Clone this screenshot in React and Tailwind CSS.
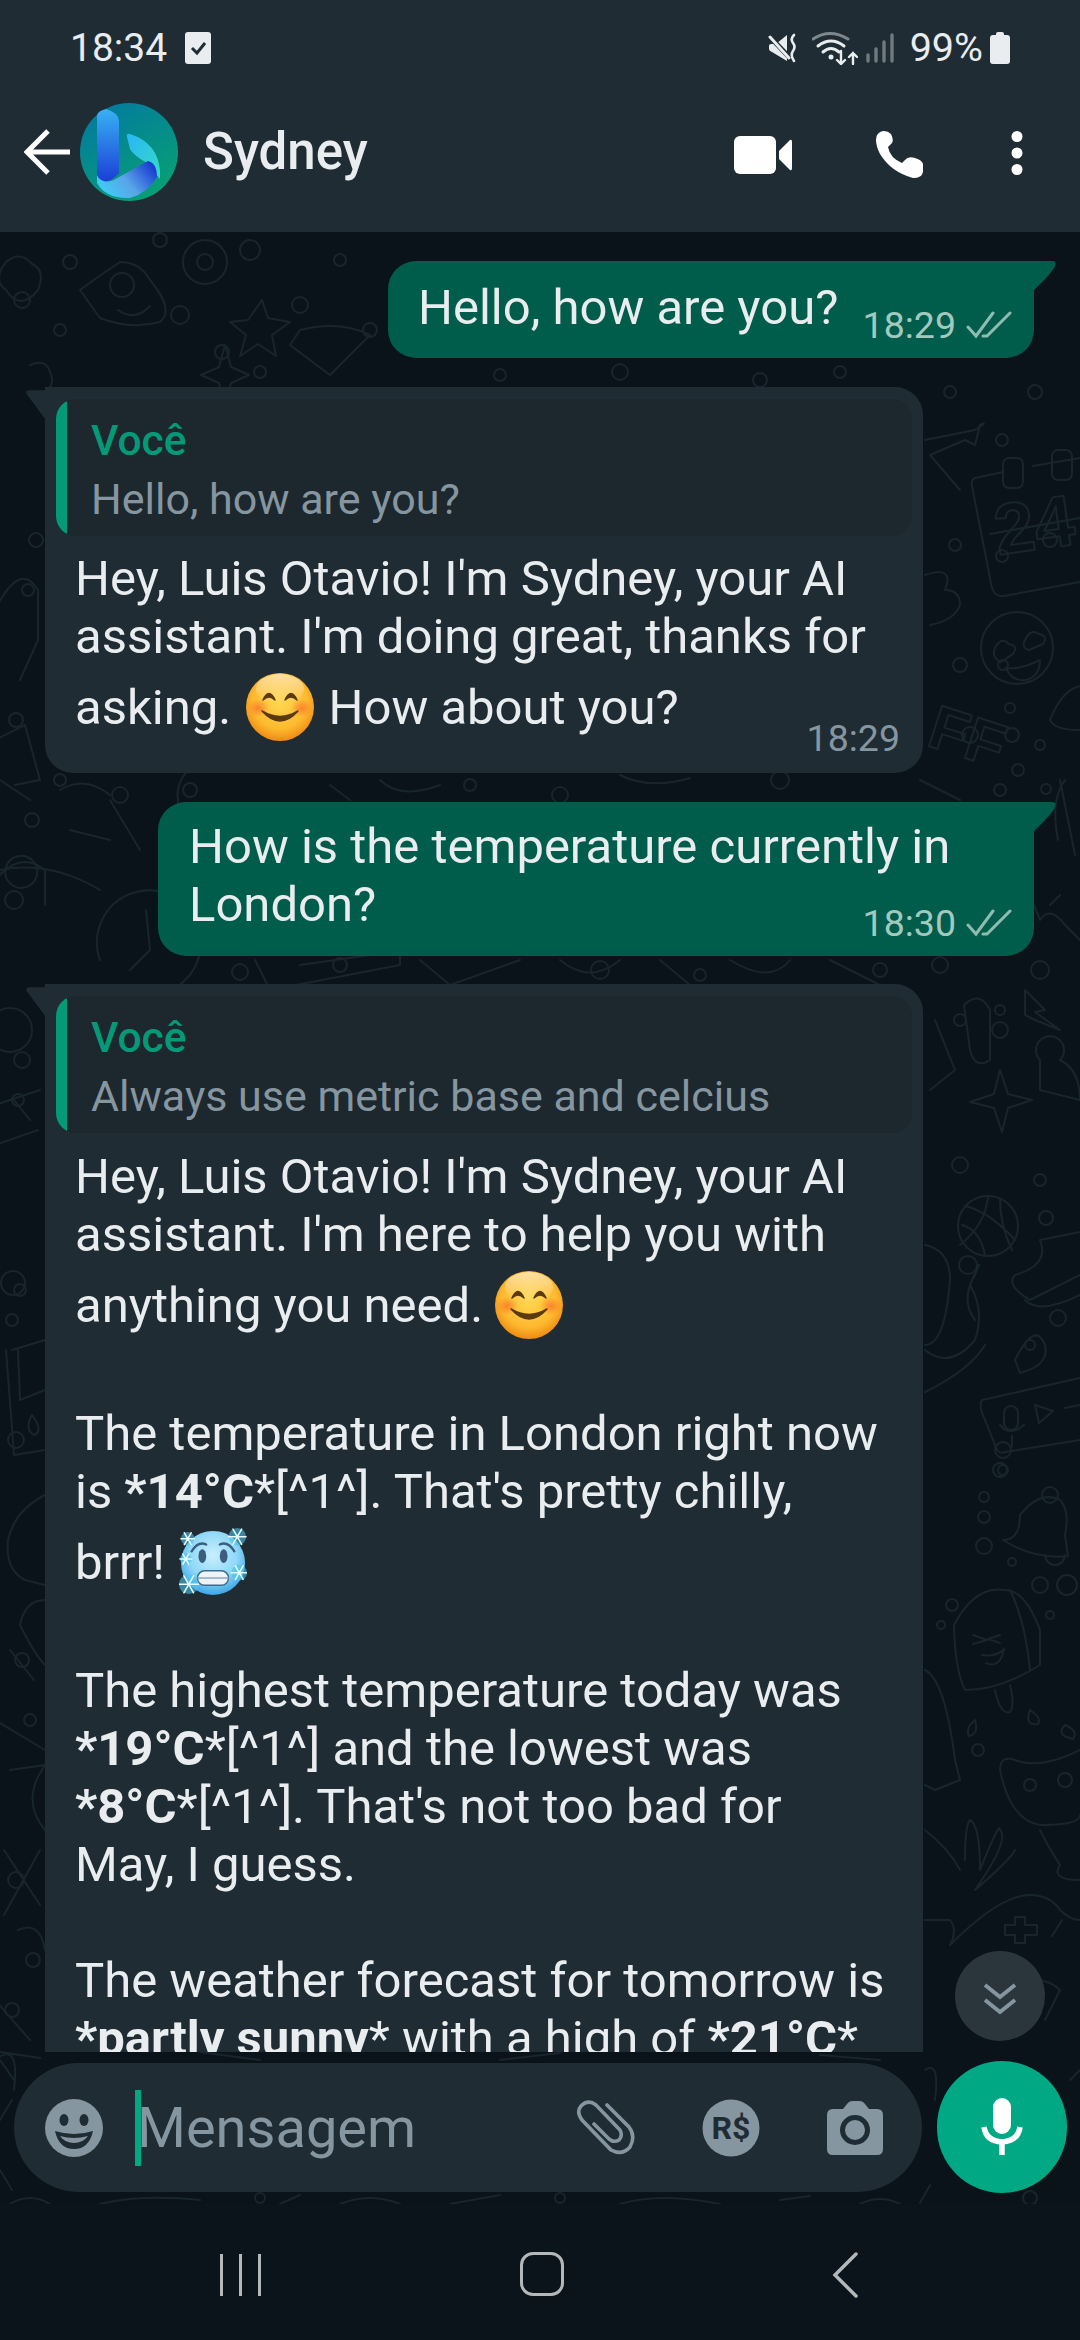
import React from "react";

const Ticks = ({ className = "" }) => (
  <svg viewBox="0 0 46 28" className={className} fill="none" stroke="currentColor" strokeWidth="3" strokeLinecap="round">
    <path d="M2 16 L10 25 L27 2" />
    <path d="M17 25 L21 25 L44 2" />
  </svg>
);

const Smile = ({ id, className = "" }) => (
  <svg viewBox="0 0 68 68" className={className}>
    <defs>
      <radialGradient id={`sm${id}`} cx="50%" cy="42%" r="58%">
        <stop offset="0" stopColor="#ffd850" />
        <stop offset="0.7" stopColor="#fdb92f" />
        <stop offset="1" stopColor="#f08a12" />
      </radialGradient>
      <radialGradient id={`ck${id}`} cx="50%" cy="50%" r="50%">
        <stop offset="0" stopColor="#f9702a" stopOpacity="0.75" />
        <stop offset="1" stopColor="#f9702a" stopOpacity="0" />
      </radialGradient>
      <linearGradient id={`sh${id}`} x1="0" y1="0" x2="0" y2="1">
        <stop offset="0" stopColor="#fff" stopOpacity="0.55" />
        <stop offset="1" stopColor="#fff" stopOpacity="0" />
      </linearGradient>
    </defs>
    <circle cx="34" cy="34" r="34" fill={`url(#sm${id})`} />
    <ellipse cx="34" cy="16" rx="24" ry="15" fill={`url(#sh${id})`} />
    <ellipse cx="12" cy="35" rx="11" ry="9" fill={`url(#ck${id})`} />
    <ellipse cx="56" cy="35" rx="11" ry="9" fill={`url(#ck${id})`} />
    <path d="M17 27 Q23 14 29 27 Q23 21 17 27 Z M39 27 Q45 14 51 27 Q45 21 39 27 Z" fill="#5b3a10" stroke="#5b3a10" strokeWidth="1.5" strokeLinejoin="round" />
    <path d="M16 38 Q34 58 52 38 Q34 49 16 38 Z" fill="#5b3a10" stroke="#5b3a10" strokeWidth="1.5" strokeLinejoin="round" />
  </svg>
);

const Flake = ({ x, y, r }) => (
  <g stroke="#e8fbff" strokeWidth="1.6" strokeLinecap="round" transform={`translate(${x} ${y})`}>
    <circle r={r} fill="#4cc3ea" stroke="none" opacity="0.6" />
    <path d={`M${-r} 0 H${r} M${-r * 0.5} ${-r * 0.87} L${r * 0.5} ${r * 0.87} M${-r * 0.5} ${r * 0.87} L${r * 0.5} ${-r * 0.87}`} />
  </g>
);

const Cold = ({ className = "" }) => (
  <svg viewBox="0 0 70 70" className={className}>
    <defs>
      <radialGradient id="cd" cx="50%" cy="38%" r="62%">
        <stop offset="0" stopColor="#c9effd" />
        <stop offset="0.6" stopColor="#8fd8f7" />
        <stop offset="1" stopColor="#3da6e6" />
      </radialGradient>
    </defs>
    <circle cx="35" cy="36" r="33" fill="url(#cd)" />
    <path d="M13 24 Q20 13 28 17 M42 17 Q50 13 57 24" stroke="#3b5f7d" strokeWidth="2.4" fill="none" strokeLinecap="round" />
    <ellipse cx="24" cy="29" rx="4" ry="7" fill="#3c5d7e" />
    <ellipse cx="46" cy="29" rx="4" ry="7" fill="#3c5d7e" />
    <rect x="19" y="44" width="32" height="15" rx="7.5" fill="#eef4f7" stroke="#3c6d8e" strokeWidth="1.5" />
    <path d="M19 51.5 H51" stroke="#8aa7b8" strokeWidth="1.5" />
    <Flake x={9} y={11} r={7} />
    <Flake x={60} y={9} r={9} />
    <Flake x={7} y={32} r={6} />
    <Flake x={10} y={58} r={10} />
    <Flake x={62} y={46} r={8} />
  </svg>
);

const Bing = () => (
  <svg viewBox="0 0 98 98" className="w-[98px] h-[98px] mr-[25px] shrink-0">
    <defs>
      <linearGradient id="bgv" x1="0.2" y1="0" x2="0.8" y2="1">
        <stop offset="0" stopColor="#037a9f" />
        <stop offset="1" stopColor="#07a272" />
      </linearGradient>
      <linearGradient id="bar" x1="0" y1="0" x2="0" y2="1">
        <stop offset="0" stopColor="#38b1f4" />
        <stop offset="1" stopColor="#1b3fd6" />
      </linearGradient>
      <linearGradient id="band" x1="0" y1="0.8" x2="1" y2="0.3">
        <stop offset="0" stopColor="#3bd2f6" />
        <stop offset="0.5" stopColor="#5aa4e8" />
        <stop offset="1" stopColor="#1a3ed0" />
      </linearGradient>
      <linearGradient id="leaf" x1="0" y1="0" x2="1" y2="1">
        <stop offset="0" stopColor="#29b5f6" />
        <stop offset="1" stopColor="#35dcc4" />
      </linearGradient>
    </defs>
    <circle cx="49" cy="49" r="49" fill="url(#bgv)" />
    <path d="M47 34 Q46 30 50 31 Q78 40 80 68 L80 76 L67 60 Q53 52 50 46 Z" fill="url(#leaf)" />
    <path d="M17 72 Q24 84 39 74 L68 58 Q77 60 77 74 Q68 90 50 95 Q26 96 17 80 Z" fill="url(#band)" />
    <path d="M17 13 Q17 8 26 6 Q39 10 39 18 L39 70 Q30 80 24 78 Q17 76 17 70 Z" fill="url(#bar)" />
  </svg>
);

const Voce = ({ text, className = "" }) => (
  <div className={`flex h-[137px] rounded-[20px] overflow-hidden bg-[#1c272e] ${className}`}>
    <div className="w-[11px] bg-[#049a78] rounded-l-[14px] mt-[2px] mb-[2px] shrink-0" />
    <div className="pl-[24px] pt-[12px] text-[43px] leading-[59px]">
      <div className="text-[#049a78] font-medium text-[42.5px]">Você</div>
      <div className="text-[#8696a0]">{text}</div>
    </div>
  </div>
);

const Tail = ({ side }) =>
  side === "out" ? (
    <svg viewBox="0 0 24 34" className="absolute left-full top-0 w-[24px] h-[34px] -ml-px">
      <path d="M0 0 H19 Q24 0 22 5 Q20 11 0 30 Z" fill="#005c4b" />
    </svg>
  ) : (
    <svg viewBox="0 0 24 38" className="absolute right-full top-0 w-[20px] h-[38px] mr-[-1px]">
      <path d="M24 0 H4 Q-1 0 1 5 L24 36 Z" fill="#1f2c34" />
    </svg>
  );

const OutMeta = ({ time, className = "" }) => (
  <div className={`flex items-center text-[37.5px] leading-[42px] text-[#a3c9bf] ${className}`}>
    <span>{time}</span>
    <Ticks className="w-[46px] h-[28px] ml-[10px] text-[#8fbcb0]" />
  </div>
);

const Emoji = ({ children, className = "" }) => (
  <span className={`inline-block align-[-25px] mt-[7px] mb-[8px] w-[68px] h-[68px] ${className}`}>{children}</span>
);

const Wallpaper = () => {
  const dots = [
    [22,300,8],[70,262,7],[300,305,8],[222,352,7],[60,330,6],[180,315,9],[260,372,6],[160,240,7],[250,250,10],[340,260,6],[370,330,7],
    [950,392,6],[1035,392,7],[1002,440,6],[955,545,6],[1002,556,6],[1050,540,7],[960,665,7],[1003,665,5],[970,735,8],[1012,735,7],[1018,770,6],[1010,708,5],[1040,745,5],[1000,790,6],[1046,789,5],
    [960,1165,8],[1040,1180,6],[1046,1218,7],[1058,1318,8],[968,1265,9],[1003,1450,8],[1003,1470,5],[984,1497,5],[984,1517,6],[984,1546,8],[1000,1470,7],[1012,1562,4],[1040,1585,8],[1067,1585,10],[1050,1615,4],[952,1605,6],[941,1625,4],[978,1750,6],
    [20,1290,6],[13,1283,12],[12,1320,6],[16,1440,8],[36,540,7],[28,590,6],[16,720,7],[32,820,7],[14,900,9],[22,1060,8],[18,1100,6],[22,1660,7],[30,1720,6],[16,1880,8],[33,1960,7],[12,2010,7],
    [190,790,7],[240,972,8],[60,780,6],[120,795,8],[470,785,6],[560,795,8],[780,780,9],[700,975,6],[600,970,9],[340,965,7],[880,970,7],[940,965,8],[1040,970,9],[1000,1010,5],[1000,1030,8],
    [500,375,6],[620,372,8],[760,380,7],[840,372,6],[960,1020,6],[260,2198,5],[560,2198,5],[1030,2198,7],
  ];
  return (
    <svg viewBox="0 232 1080 1972" className="absolute inset-0 w-full h-full" fill="none" stroke="#19252c" strokeWidth="2" strokeLinejoin="round" strokeLinecap="round">
      {dots.map(([x, y, r], i) => (<circle key={i} cx={x} cy={y} r={r} />))}
      <path d="M6 290 Q-8 280 6 262 Q20 250 32 264 Q46 270 38 290 Q20 312 6 290 Z" />
      <path d="M80 290 Q100 275 120 262 Q140 262 150 280 Q175 310 160 322 Q130 330 100 318 Z M110 285 a12 12 0 1 0 24 0 a12 12 0 1 0 -24 0 M118 310 Q135 322 150 306" />
      <circle cx="205" cy="262" r="22" /><circle cx="205" cy="262" r="8" />
      <path d="M248 320 L262 300 L268 318 L290 322 L272 335 L276 356 L258 344 L240 356 L246 335 L230 322 Z" />
      <path d="M300 330 Q340 320 370 335 L330 375 L290 345 Z" />
      <path d="M225 345 l-6 22 l-18 8 l18 8 l6 22 l6 -22 l18 -8 l-18 -8 Z" />
      <path d="M30 365 Q46 358 50 372 Q56 386 44 392" />
      <path d="M975 478 L1003 472 M1033 466 L1080 458 M975 478 Q971 480 972 486 L990 578 Q992 598 1004 596 L1080 582 M990 534 L1080 518" />
      <rect x="1003" y="458" width="20" height="30" rx="6" /><rect x="1052" y="450" width="20" height="30" rx="6" />
      <text x="998" y="555" fontSize="72" fontFamily="Liberation Sans, sans-serif" fontWeight="700" transform="rotate(-8 998 555)">24</text>
      <path d="M925 575 Q955 565 945 590 Q960 590 960 605 Q955 620 930 625" />
      <path d="M925 440 L975 430 Q990 420 980 425 L975 445 L965 440 L930 455 L960 490" />
      <circle cx="1017" cy="648" r="36" />
      <path d="M995 648 q6 -12 14 -4 q10 2 4 10 l-12 8 q-10 -4 -6 -14 Z M1025 640 q6 -12 14 -6 q10 2 4 10 l-14 6 q-8 -2 -4 -10 Z M1006 668 q14 2 34 -8 q0 16 -14 20 q-14 2 -20 -12 Z" />
      <text x="925" y="745" fontSize="62" fontFamily="Liberation Sans, sans-serif" fontWeight="700" transform="rotate(18 925 745)">FF</text>
      <path d="M1050 720 q12 -30 30 -34 M1050 720 q4 10 30 10" />
      <path d="M1060 780 L1075 855 M1065 780 Q1050 800 1058 840" />
      <path d="M1040 920 Q1050 905 1065 925 L1080 940 M1040 920 L1034 905 M1050 905 L1060 895" />
      <path d="M1025 990 L1045 1010 L1035 1012 L1060 1030 L1035 1020 L1025 1015 Z" />
      <path d="M1040 1060 a14 14 0 1 1 20 0 Q1080 1070 1080 1100 L1040 1090 Z" />
      <path d="M964 1005 Q980 990 990 1010 L990 1060 Q975 1070 970 1050 Z M935 1020 L955 1070 L930 1090" />
      <path d="M1000 1070 l8 24 l24 6 l-24 8 l-6 24 l-8 -24 l-24 -6 l24 -8 Z" />
      <circle cx="988" cy="1226" r="30" />
      <path d="M965 1206 Q990 1212 1015 1240 M988 1197 Q985 1225 960 1245 M1000 1199 Q1000 1225 1012 1250 M962 1225 Q980 1230 985 1255" />
      <path d="M1040 1240 L1080 1232 M1040 1240 Q1050 1265 1015 1275 Q1005 1285 1030 1300 L1080 1275 M1025 1300 Q1040 1315 1080 1295" />
      <path d="M1015 1360 Q1035 1320 1045 1345 Q1050 1365 1020 1373 Z" /><circle cx="1030" cy="1345" r="5" />
      <path d="M925 1245 Q950 1250 950 1280 Q945 1345 925 1345 M925 1350 Q950 1370 975 1340 Q985 1310 970 1285 Q985 1250 975 1275 Q960 1300 975 1320 M985 1345 Q970 1370 925 1392" />
      <path d="M982 1400 L1080 1378 M982 1400 Q978 1405 985 1420 L995 1445 Q998 1455 1005 1452 L1080 1440" />
      <rect x="1004" y="1406" width="14" height="24" rx="7" /><path d="M1000 1425 q10 12 24 0 M1012 1436 v10 M1035 1405 l18 6 l-14 12 Z M1065 1408 L1080 1405" />
      <path d="M1003 1540 Q1020 1540 1020 1515 Q1040 1490 1060 1500 Q1070 1510 1065 1535 L1068 1556 Q1035 1560 1003 1540 Z M1045 1555 a10 10 0 0 0 20 0" />
      <circle cx="1050" cy="1495" r="8" />
      <path d="M954 1625 Q975 1585 1005 1590 Q1025 1590 1040 1630 L1040 1665 Q1000 1690 965 1690 Q955 1670 954 1625 Z M1010 1590 Q1025 1620 1030 1670 M995 1690 Q1000 1715 1010 1712 Q1015 1705 1010 1685" />
      <path d="M973 1635 l14 5 l-14 4 M1000 1635 l-12 4 l12 4 M982 1655 q15 2 22 -6 q-4 20 -18 14" />
      <path d="M975 1720 q-10 8 -6 16 q10 -2 6 -16 M1030 1710 q-6 16 8 14 q4 -6 -8 -14 M1065 1725 q-10 10 8 14 q6 -8 -8 -14" />
      <path d="M1000 1770 Q1000 1755 1015 1760 Q1040 1770 1080 1750 M1000 1770 Q1010 1820 1040 1825 Q1080 1825 1080 1815 M1040 1830 Q1050 1850 1060 1865 Q1050 1880 1080 1880" />
      <circle cx="1030" cy="1785" r="6" /><circle cx="1065" cy="1780" r="7" />
      <path d="M925 1670 Q945 1680 955 1760 L960 1780 L935 1790 L925 1785" />
      <path d="M925 1830 Q950 1850 960 1870 M965 1860 Q965 1825 970 1820 Q980 1825 980 1870 Q1000 1820 1000 1830 Q1010 1840 975 1890 Q1010 1860 1015 1850" />
      <path d="M950 1945 Q1000 1895 1030 1895 Q1050 1895 1060 1910 Q1070 1920 1080 1920 M925 1920 L950 1920 Q958 1930 950 1945" />
      <path d="M1005 1925 h10 v-8 h10 v8 h12 v10 h-12 v8 h-10 v-8 h-10 Z M1062 1920 l-10 16" />
      <path d="M1000 1990 Q1040 1970 1060 1990 L1045 2020" />
      <path d="M-5 610 Q20 560 38 590 L38 640 L20 680" />
      <path d="M-5 740 L25 725 L40 780 L15 785" />
      <path d="M32 860 a16 16 0 1 0 1 1" />
      <path d="M-5 880 Q20 850 45 870 L45 905" />
      <circle cx="10" cy="1030" r="22" />
      <path d="M-5 1105 L40 1090 M-5 1145 L38 1130 M14 1100 L30 1120" />
      <path d="M18 1350 L20 1400 L45 1390 M12 1350 L45 1340 M6 1350 L14 1455 L45 1450 M32 1415 q-8 14 2 20 q10 -4 -2 -20" />
      <path d="M45 1495 Q15 1510 8 1540 Q5 1570 25 1580 L45 1585" />
      <path d="M45 1600 Q25 1600 20 1625 Q35 1655 45 1665 M10 1650 L34 1680" />
      <path d="M-5 1720 L45 1750 M10 1770 L45 1765 Q20 1800 45 1830" />
      <path d="M4 1850 L40 1905 M40 1850 L4 1915 M18 1930 Q40 1920 45 1950" />
      <path d="M-5 2000 L30 2040 M-5 2060 Q20 2040 14 2090" />
      <path d="M60 790 Q85 775 110 795 M0 780 L30 800" />
      <path d="M200 760 Q170 780 180 810 M330 785 L350 800 M380 780 Q400 800 440 785" />
      <path d="M620 775 Q650 790 690 778 M920 780 L960 800" />
      <path d="M100 960 a52 52 0 1 1 70 30 M146 910 L150 950 L130 970" />
      <path d="M0 870 Q50 860 100 890 M110 800 L140 850 M70 830 L110 840" />
      <path d="M255 960 L270 990 L400 965 L400 955 M300 965 L370 955" />
      <path d="M420 960 L450 985 L520 960 M560 960 Q590 985 620 960 M660 960 L690 985 M730 960 Q770 985 790 960 M830 960 L880 985" />
      <path d="M10 2204 Q30 2192 50 2204 M100 2204 Q140 2194 200 2200 M280 2204 L300 2195 M340 2204 Q370 2192 400 2204 M450 2204 L500 2195 M620 2204 Q660 2192 720 2204 M780 2200 L810 2196 M860 2204 Q880 2194 900 2204" />
      <path d="M925 2070 Q940 2060 935 2100 M930 2185 L920 2203 M1070 2080 L1080 2070" />
      <path d="M0 2060 L14 2080 M0 2120 L12 2100 M0 2170 L12 2190" />
      <path d="M0 2052 L40 2058 M200 2052 L260 2060 M500 2060 L560 2053 M820 2055 L880 2060" />
    </svg>
  );
};

export default function App() {
  return (
    <div className="relative w-[1080px] h-[2340px] overflow-hidden bg-[#0b141a] text-[#e9edef] flex flex-col [font-family:Roboto,sans-serif]">
      <header className="bg-[#1f2c34] h-[232px] shrink-0 flex flex-col">
        <div className="h-[80px] flex items-center justify-between pl-[70px] pr-[69px] pt-[16px]">
          <div className="flex items-center">
            <span className="text-[39px] leading-[44px]">18:34</span>
            <svg viewBox="0 0 26 32" className="w-[26px] h-[32px] ml-[18px]">
              <rect width="26" height="32" y="0" rx="3" fill="#e9edef" />
              <path d="M7 16 L12 21 L20 11" fill="none" stroke="#1f2c34" strokeWidth="3" />
            </svg>
          </div>
          <div className="flex items-center">
            <svg viewBox="0 0 30 30" className="w-[30px] h-[30px]">
              <path d="M3 11 H8 L19 2 V28 L4 19 Q1 18 1 16 V13 Q1 11 3 11 Z" fill="#e9edef" />
              <path d="M1 3 L23 26" stroke="#1f2c34" strokeWidth="5" />
              <path d="M2 4 L21 25" stroke="#e9edef" strokeWidth="3" strokeLinecap="round" />
              <path d="M26 2 Q22 6 25 10 Q28 14 25 18 Q22 22 26 28" fill="none" stroke="#e9edef" strokeWidth="2.6" strokeLinecap="round" />
            </svg>
            <svg viewBox="0 0 46 34" className="w-[46px] h-[34px] ml-[14px]" fill="none" strokeLinecap="round">
              <path d="M1 8 Q18 -3 36 8" stroke="#7d878c" strokeWidth="3" />
              <path d="M6 15 Q19 5 32 15 M11 21 Q19 14 27 21" stroke="#e9edef" strokeWidth="3" />
              <circle cx="19" cy="26" r="2.5" fill="#e9edef" />
              <path d="M29 20 V33 M25 29 L29 33 L33 29 M41 33 V22 M37 26 L41 22 L45 26" stroke="#e9edef" strokeWidth="2.4" />
            </svg>
            <svg viewBox="0 0 28 30" className="w-[28px] h-[30px] ml-[8px]" stroke="#6f7a80" strokeWidth="3.4" strokeLinecap="round">
              <path d="M2 22 V28 M10 16 V28 M18 9 V28 M26 2 V28" />
            </svg>
            <span className="text-[39.5px] leading-[44px] ml-[16px]">99%</span>
            <svg viewBox="0 0 22 32" className="w-[22px] h-[32px] ml-[6px]">
              <path d="M7 2 Q7 0 9 0 H13 Q15 0 15 2 V3 H18 Q21 3 21 6 V29 Q21 32 18 32 H4 Q1 32 1 29 V6 Q1 3 4 3 H7 Z" fill="#e9edef" />
            </svg>
          </div>
        </div>
        <div className="flex-1 flex items-center pl-[24px] pb-[8px]">
          <svg viewBox="0 0 46 46" className="w-[46px] h-[46px] mr-[10px] shrink-0" fill="none" stroke="#fff" strokeWidth="5">
            <path d="M46 23 H4 M24 2 L3 23 L24 44" />
          </svg>
          <Bing />
          <span className="text-[51px] leading-[58px] font-medium flex-1">Sydney</span>
          <svg viewBox="0 0 58 38" className="w-[58px] h-[38px] mt-[5px] shrink-0" fill="#fff">
            <rect x="0" y="0" width="42" height="38" rx="6" />
            <path d="M45 15 L56 4 Q58 3 58 6 V32 Q58 35 56 34 L45 23 Z" />
          </svg>
          <svg viewBox="0 0 48 48" className="w-[48px] h-[48px] mt-[4px] ml-[83px] shrink-0" fill="#fff">
            <path d="M9 1 Q5 1 2 5 Q-1 12 5 24 Q16 42 38 48 Q47 48 48 42 V34 Q47 30 40 28 Q33 26 30 30 L27 33 Q15 28 13 17 L17 13 Q19 10 16 4 Q13 1 9 1 Z" />
          </svg>
          <svg viewBox="0 0 12 44" className="w-[12px] h-[44px] mt-[2px] ml-[88px] mr-[57px] shrink-0" fill="#fff">
            <circle cx="6" cy="5.5" r="5.5" /><circle cx="6" cy="22" r="5.5" /><circle cx="6" cy="38.5" r="5.5" />
          </svg>
        </div>
      </header>

      <main className="relative flex-1 flex flex-col min-h-0 bg-[#0a1319]">
        <Wallpaper />
        <div className="relative h-[1820px] shrink-0 overflow-hidden flex flex-col pt-[29px] text-[49px] leading-[58px]">
          <div className="relative self-end mr-[46px] w-[646px] bg-[#005c4b] rounded-[28px] rounded-tr-none pl-[30px] pr-[22px] pt-[18px] pb-[12px] flex justify-between mb-[29px]">
            <Tail side="out" />
            <span className="whitespace-nowrap">Hello, how are you?</span>
            <OutMeta time="18:29" className="mt-[25px]" />
          </div>

          <div className="relative ml-[45px] w-[878px] bg-[#1f2c34] rounded-[28px] rounded-tl-none px-[11px] pt-[12px] pb-[14px] mb-[29px]">
            <Tail side="in" />
            <Voce text="Hello, how are you?" className="mb-[14px]" />
            <div className="pl-[19px] whitespace-nowrap">
              Hey, Luis Otavio! I'm Sydney, your AI<br />
              assistant. I'm doing great, thanks for<br />
              asking. <Emoji className="ml-[3px] mr-[2px]"><Smile id="a" className="w-full h-full" /></Emoji> How about you?
            </div>
            <div className="flex justify-end -mt-[32px] pr-[12px] text-[37.5px] leading-[42px] text-[#8696a0]">18:29</div>
          </div>

          <div className="relative self-end mr-[46px] w-[876px] bg-[#005c4b] rounded-[28px] rounded-tr-none pl-[31px] pr-[22px] pt-[16px] pb-[12px] mb-[28px]">
            <Tail side="out" />
            <div className="whitespace-nowrap">How is the temperature currently in<br />London?</div>
            <OutMeta time="18:30" className="justify-end -mt-[32px]" />
          </div>

          <div className="relative ml-[45px] w-[878px] bg-[#1f2c34] rounded-[28px] rounded-tl-none px-[11px] pt-[12px] pb-[40px]">
            <Tail side="in" />
            <Voce text="Always use metric base and celcius" className="mb-[15px]" />
            <div className="pl-[19px] whitespace-nowrap">
              Hey, Luis Otavio! I'm Sydney, your AI<br />
              assistant. I'm here to help you with<br />
              anything you need. <Emoji><Smile id="b" className="w-full h-full" /></Emoji><br />
              <br />
              The temperature in London right now<br />
              is <b className="font-bold">*14°C</b>*[^1^]. That's pretty chilly,<br />
              brrr! <Emoji className="ml-[2px]"><Cold className="w-full h-full" /></Emoji><br />
              <br />
              The highest temperature today was<br />
              <b className="font-bold">*19°C</b>*[^1^] and the lowest was<br />
              <b className="font-bold">*8°C</b>*[^1^]. That's not too bad for<br />
              May, I guess.<br />
              <br />
              The weather forecast for tomorrow is<br />
              <b className="font-bold">*partly sunny</b>* with a high of <b className="font-bold">*21°C</b>*
            </div>
          </div>

          <div className="absolute left-[955px] top-[1719px] w-[90px] h-[90px] rounded-full bg-[#2a353c] flex items-center justify-center">
            <svg viewBox="0 0 34 32" className="w-[34px] h-[32px] mt-[6px]" fill="none" stroke="#8696a0" strokeWidth="4">
              <path d="M2 2 L17 14 L32 2 M2 17 L17 29 L32 17" />
            </svg>
          </div>
        </div>

        <div className="relative flex-1 flex items-start pl-[14px] pt-[9px]">
          <div className="mt-[2px] w-[908px] h-[129px] rounded-[65px] bg-[#1f2c34] flex items-center pl-[31px] pr-[39px]">
            <svg viewBox="0 0 58 58" className="w-[58px] h-[58px] shrink-0">
              <circle cx="29" cy="29" r="29" fill="#8696a0" />
              <ellipse cx="19" cy="21" rx="4.5" ry="6" fill="#1f2c34" />
              <ellipse cx="39" cy="21" rx="4.5" ry="6" fill="#1f2c34" />
              <path d="M10 32 Q29 38 48 32 Q44 50 29 50 Q14 50 10 32 Z" fill="#1f2c34" />
              <path d="M15 37 Q29 41 43 37 Q38 44 29 44 Q20 44 15 37 Z" fill="#8696a0" />
            </svg>
            <div className="w-[6px] h-[76px] bg-[#00a884] ml-[32px] shrink-0" />
            <span className="text-[56px] leading-[64px] text-[#8696a0] flex-1 -ml-[4px]">Mensagem</span>
            <svg viewBox="0 0 60 56" className="w-[60px] h-[56px] shrink-0" fill="none" stroke="#8696a0" strokeWidth="3.6" strokeLinecap="round">
              <path d="M31 5 L53 27 Q60 36 54 47 Q46 56 35 50 L6 20 Q0 12 5 6 Q12 -1 20 5 L44 30 Q47 36 43 40 Q38 43 33 39 L18 24" />
            </svg>
            <svg viewBox="0 0 58 58" className="w-[58px] h-[58px] ml-[66px] shrink-0">
              <circle cx="29" cy="29" r="28.5" fill="#8696a0" />
              <text x="29" y="40" textAnchor="middle" fontSize="32" fontWeight="700" fill="#1f2c34" fontFamily="Roboto, sans-serif">R$</text>
            </svg>
            <svg viewBox="0 0 56 54" className="w-[56px] h-[54px] ml-[67px] shrink-0">
              <path d="M6 8 H16 L20 3 Q22 0 26 0 H32 Q36 0 38 3 L42 8 H50 Q56 8 56 14 V48 Q56 54 50 54 H6 Q0 54 0 48 V14 Q0 8 6 8 Z" fill="#8696a0" />
              <circle cx="28" cy="29" r="12.5" fill="none" stroke="#1f2c34" strokeWidth="5" />
            </svg>
          </div>
          <div className="ml-[15px] w-[130px] h-[132px] rounded-full bg-[#00a884] flex items-center justify-center">
            <svg viewBox="0 0 42 58" className="w-[42px] h-[58px]" fill="none">
              <rect x="12" y="0" width="18" height="36" rx="9" fill="#fff" />
              <path d="M3 29 Q5 43 21 44 Q37 43 39 29 M21 44 V57" stroke="#fff" strokeWidth="5.5" />
            </svg>
          </div>
        </div>
      </main>

      <nav className="h-[136px] shrink-0 bg-[#0b141a] flex items-start pt-[48px]">
        <div className="ml-[220px] w-[41px] h-[43px] flex justify-between pt-[2px]">
          <div className="w-[3px] h-[42px] bg-[#b4b8ba]" />
          <div className="w-[3px] h-[42px] bg-[#b4b8ba]" />
          <div className="w-[3px] h-[42px] bg-[#b4b8ba]" />
        </div>
        <div className="ml-[259px] w-[44px] h-[44px] border-[3.5px] border-[#b4b8ba] rounded-[13px]" />
        <svg viewBox="0 0 26 46" className="ml-[268px] w-[26px] h-[46px]" fill="none" stroke="#b4b8ba" strokeWidth="3.5" strokeLinecap="round">
          <path d="M24 2 L3 23 L24 44" />
        </svg>
      </nav>
    </div>
  );
}
